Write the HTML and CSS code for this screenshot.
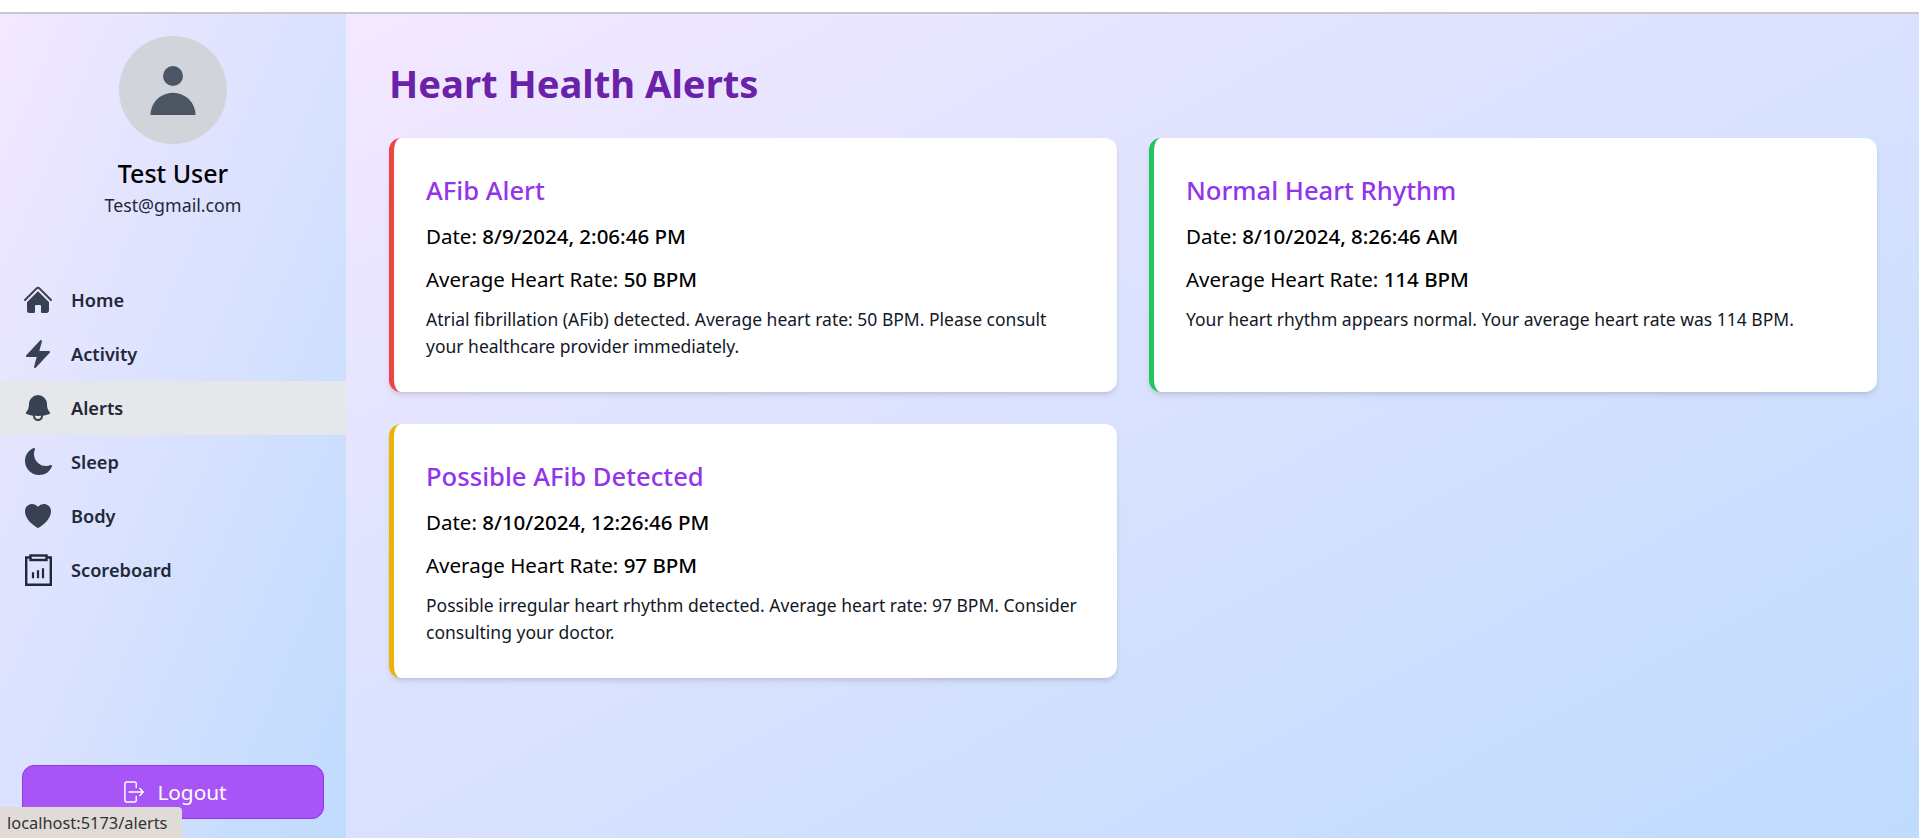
FILE: index.html
```html
<!DOCTYPE html>
<html lang="en">
<head>
  <meta charset="UTF-8">
  <meta name="viewport" content="width=device-width, initial-scale=1.0">
  <title>Heart Health Alerts</title>
  <link rel="stylesheet" href="styles.css">
</head>
<body>
  <div class="topbar"></div>
  <div class="app">
    <aside class="sidebar">
      <div class="profile">
        <div class="avatar">
          <svg viewBox="0 0 54 54" width="54" height="54">
            <circle cx="27" cy="13" r="10"/>
            <path d="M4.500 52a22.500 22.300 0 0 1 45 0Z"/>
          </svg>
        </div>
        <div class="name">Test User</div>
        <div class="email">Test@gmail.com</div>
      </div>

      <nav class="nav">
        <a class="nav-item">
          <svg class="nav-icon" viewBox="0 0 24 24"><path d="M11.47 3.841a.75.75 0 0 1 1.06 0l8.69 8.69a.75.75 0 1 0 1.06-1.061l-8.689-8.69a2.25 2.25 0 0 0-3.182 0l-8.69 8.69a.75.75 0 1 0 1.061 1.06l8.69-8.689Z"/><path d="m12 5.432 8.159 8.159c.03.03.06.058.091.086v6.198c0 1.035-.84 1.875-1.875 1.875H15a.75.75 0 0 1-.75-.75v-4.5a.75.75 0 0 0-.75-.75h-3a.75.75 0 0 0-.75.75V21a.75.75 0 0 1-.75.75H5.625a1.875 1.875 0 0 1-1.875-1.875v-6.198a2.29 2.29 0 0 0 .091-.086L12 5.432Z"/></svg>
          Home
        </a>
        <a class="nav-item">
          <svg class="nav-icon" viewBox="0 0 24 24"><path d="M14.615 1.595a.75.75 0 0 1 .359.852L12.982 9.75h7.268a.75.75 0 0 1 .548 1.262l-10.5 11.25a.75.75 0 0 1-1.272-.71l1.992-7.302H3.75a.75.75 0 0 1-.548-1.262l10.5-11.25a.75.75 0 0 1 .913-.143Z"/></svg>
          Activity
        </a>
        <a class="nav-item active">
          <svg class="nav-icon" viewBox="0 0 24 24"><path fill-rule="evenodd" d="M5.25 9a6.75 6.75 0 0 1 13.5 0v.75c0 2.123.8 4.057 2.118 5.52a.75.75 0 0 1-.297 1.206c-1.544.57-3.16.99-4.831 1.243a3.75 3.75 0 1 1-7.48 0 24.585 24.585 0 0 1-4.831-1.244.75.75 0 0 1-.298-1.205A8.217 8.217 0 0 0 5.25 9.75V9Zm4.502 8.9a2.25 2.25 0 1 0 4.496 0 25.057 25.057 0 0 1-4.496 0Z"/></svg>
          Alerts
        </a>
        <a class="nav-item">
          <svg class="nav-icon" viewBox="0 0 24 24"><path d="M9.528 1.718a.75.75 0 0 1 .162.819A8.97 8.97 0 0 0 9 6a9 9 0 0 0 9 9 8.97 8.97 0 0 0 3.463-.69.75.75 0 0 1 .981.98 10.503 10.503 0 0 1-9.694 6.46c-5.799 0-10.5-4.7-10.5-10.5 0-4.368 2.667-8.112 6.46-9.694a.75.75 0 0 1 .818.162Z"/></svg>
          Sleep
        </a>
        <a class="nav-item">
          <svg class="nav-icon" viewBox="0 0 24 24"><path d="m11.645 20.91-.007-.003-.022-.012a15.247 15.247 0 0 1-.383-.218 25.18 25.18 0 0 1-4.244-3.17C4.688 15.36 2.25 12.174 2.25 8.25 2.25 5.322 4.714 3 7.688 3A5.5 5.5 0 0 1 12 5.052 5.5 5.5 0 0 1 16.313 3c2.973 0 5.437 2.322 5.437 5.25 0 3.925-2.438 7.111-4.739 9.256a25.175 25.175 0 0 1-4.244 3.17 15.247 15.247 0 0 1-.383.219l-.022.012-.007.004-.003.001a.752.752 0 0 1-.704 0l-.003-.001Z"/></svg>
          Body
        </a>
        <a class="nav-item">
          <svg class="nav-icon board" viewBox="0 0 32 32"><path d="M8 3.500H4.200v27.300h24.600V3.500H25"/><rect x="8.500" y="1.500" width="16" height="4.500"/><path class="bars" d="M11 24.300v-6M16 24.300v-8M21 24.300v-10"/></svg>
          Scoreboard
        </a>
      </nav>

      <button class="logout">
        <svg viewBox="0 0 22 22" width="20" height="22" preserveAspectRatio="none"><path d="M13.500 7V3a2 2 0 0 0-2-2H3a2 2 0 0 0-2 2v16a2 2 0 0 0 2 2h8.500a2 2 0 0 0 2-2v-4M5 11h15.500M17 7l4 4-4 4"/></svg>
        Logout
      </button>
    </aside>

    <main class="main">
      <h1 class="title">Heart Health Alerts</h1>
      <div class="cards">
        <div class="card red">
          <h2>AFib Alert</h2>
          <p class="row">Date: <b>8/9/2024, 2:06:46 PM</b></p>
          <p class="row">Average Heart Rate: <b>50 BPM</b></p>
          <p class="msg">Atrial fibrillation (AFib) detected. Average heart rate: 50 BPM. Please consult your healthcare provider immediately.</p>
        </div>
        <div class="card green">
          <h2>Normal Heart Rhythm</h2>
          <p class="row">Date: <b>8/10/2024, 8:26:46 AM</b></p>
          <p class="row">Average Heart Rate: <b>114 BPM</b></p>
          <p class="msg">Your heart rhythm appears normal. Your average heart rate was 114 BPM.</p>
        </div>
        <div class="card amber">
          <h2>Possible AFib Detected</h2>
          <p class="row">Date: <b>8/10/2024, 12:26:46 PM</b></p>
          <p class="row">Average Heart Rate: <b>97 BPM</b></p>
          <p class="msg">Possible irregular heart rhythm detected. Average heart rate: 97 BPM. Consider consulting your doctor.</p>
        </div>
      </div>
    </main>
  </div>
  <div class="status">localhost:5173/alerts</div>
</body>
</html>
```

FILE: styles.css
```css
html, body {
    height: 100%;
}

body {
    margin: 0;
    font-family: "Noto Sans", "Open Sans", sans-serif;
    background-color: #fff;
    color: #000;
    display: flex;
    flex-direction: column;
    overflow: hidden;
}

.topbar {
    height: 12px;
    border-bottom: 2px solid #c8c8c8;
    flex: none;
}

.app {
    flex: 1;
    display: flex;
    min-height: 0;
}

.sidebar {
    width: 346px;
    flex: none;
    display: flex;
    flex-direction: column;
    background: linear-gradient(to bottom right, #f3e8ff, #bfdbfe);
}

.profile {
    display: flex;
    flex-direction: column;
    align-items: center;
    padding-top: 22px;
}

.avatar {
    width: 108px;
    height: 108px;
    border-radius: 50%;
    background-color: #d1d5db;
    display: flex;
    align-items: center;
    justify-content: center;
}

.avatar svg {
    fill: #4b5563;
}

.name {
    margin-top: 11px;
    font-size: 25px;
    line-height: 36px;
    font-weight: 500;
}

.email {
    margin-top: 1px;
    font-size: 17.8px;
    line-height: 26px;
    color: #1f2937;
}

.nav {
    margin-top: 55px;
    display: flex;
    flex-direction: column;
}

.nav-item {
    height: 54px;
    display: flex;
    align-items: center;
    gap: 17px;
    padding-left: 22px;
    font-size: 18.2px;
    font-weight: 600;
    color: #1f2937;
}

.nav-item.active {
    background-color: #e5e7eb;
}

.nav-icon {
    width: 32px;
    height: 32px;
    fill: #374151;
    flex: none;
}

.nav-icon.board {
    fill: none;
    stroke: #1f2937;
    stroke-width: 2.4;
}

.nav-icon .bars {
    stroke-width: 2.2;
}

.logout {
    margin: auto 22px 19px;
    height: 54px;
    padding: 0 0 0 5px;
    display: flex;
    align-items: center;
    justify-content: center;
    gap: 13px;
    background-color: #a855f7;
    border: 1px solid #9333ea;
    border-radius: 12px;
    color: #fff;
    font-family: inherit;
    font-size: 20.8px;
}

.logout svg {
    fill: none;
    stroke: #fff;
    stroke-width: 1.6;
}

.main {
    flex: 1;
    min-width: 0;
    padding: 40px 42px 0 43px;
    background: linear-gradient(to bottom right, #f3e8ff, #bfdbfe);
}

.title {
    margin: 0 0 26px;
    font-size: 38.2px;
    line-height: 58px;
    font-weight: 700;
    color: #6b21a8;
}

.cards {
    display: grid;
    grid-template-columns: 1fr 1fr;
    gap: 32px;
    align-items: start;
}

.card {
    height: 254px;
    box-sizing: border-box;
    padding: 35px 32px 0;
    background-color: #fff;
    border-left: 5px solid;
    border-radius: 12px;
    box-shadow: 0 4px 6px -1px rgba(0, 0, 0, 0.1), 0 2px 4px -2px rgba(0, 0, 0, 0.1);
}

.red { border-left-color: #ef4444; }
.green { border-left-color: #22c55e; }
.amber { border-left-color: #eab308; }

.card h2 {
    margin: 0 0 12px;
    font-size: 25.6px;
    line-height: 36px;
    font-weight: 500;
    color: #9333ea;
}

.row {
    margin: 0 0 12.5px;
    font-size: 20.5px;
    line-height: 30px;
}

.row b {
    font-weight: 500;
}

.msg {
    margin: 0;
    font-size: 17.5px;
    line-height: 27px;
    color: #111827;
}

.status {
    position: fixed;
    left: 0;
    bottom: 0;
    height: 31px;
    padding: 0 15px 0 7px;
    display: flex;
    align-items: center;
    font-size: 16.4px;
    color: #333;
    background-color: #e0dbd6;
    border-top-right-radius: 4px;
}
```
